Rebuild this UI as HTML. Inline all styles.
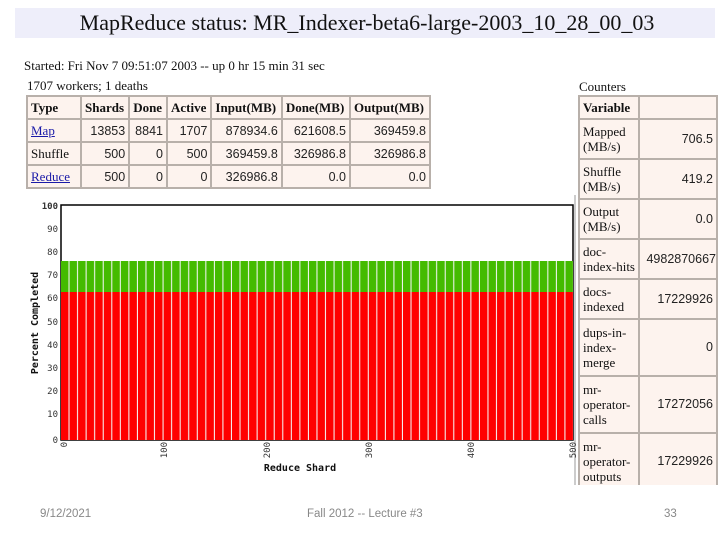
<!DOCTYPE html>
<html><head><style>
body{margin:0;width:720px;height:540px;background:#fff;position:relative;overflow:hidden;font-family:"Liberation Serif",serif;color:#111}
.a{position:absolute}
table{border-collapse:collapse;position:absolute;background:#fdf3ee;font-size:13px}
td{border:2px solid #b8b0aa;padding:0 3px;box-sizing:border-box;white-space:nowrap}
.n{text-align:right;font-family:"Liberation Sans",sans-serif;font-size:12.5px;color:#222}
a{color:#1a1aa8;text-decoration:underline}
.ft{font-family:"Liberation Sans",sans-serif;font-size:11.5px;color:#888;top:508px}
</style></head><body>
<div class="a" style="left:15px;top:8px;width:700px;height:30px;background:#eeeefa"></div>
<div class="a" style="left:0;top:10px;width:734px;text-align:center;font-size:22px">MapReduce status: MR_Indexer-beta6-large-2003_10_28_00_03</div>
<div class="a" style="left:24px;top:58px;font-size:13px">Started: Fri Nov 7 09:51:07 2003 -- up 0 hr 15 min 31 sec</div>
<div class="a" style="left:27px;top:78px;font-size:13px">1707 workers; 1 deaths</div>
<table style="left:26px;top:95px;width:405px">
<tr style="height:23px;font-weight:bold"><td style="width:54px">Type</td><td>Shards</td><td>Done</td><td>Active</td><td>Input(MB)</td><td>Done(MB)</td><td>Output(MB)</td></tr>
<tr style="height:23px"><td><a>Map</a></td><td class="n">13853</td><td class="n">8841</td><td class="n">1707</td><td class="n">878934.6</td><td class="n">621608.5</td><td class="n">369459.8</td></tr>
<tr style="height:23px"><td>Shuffle</td><td class="n">500</td><td class="n">0</td><td class="n">500</td><td class="n">369459.8</td><td class="n">326986.8</td><td class="n">326986.8</td></tr>
<tr style="height:23px"><td><a>Reduce</a></td><td class="n">500</td><td class="n">0</td><td class="n">0</td><td class="n">326986.8</td><td class="n">0.0</td><td class="n">0.0</td></tr>
</table>
<div class="a" style="left:579px;top:79px;font-size:13px">Counters</div>
<table style="left:578px;top:95px;width:140px;font-size:13px;line-height:15px">
<tr style="height:23px"><td style="width:60px;font-weight:bold">Variable</td><td></td></tr>
<tr style="height:40px"><td>Mapped<br>(MB/s)</td><td class="n">706.5</td></tr>
<tr style="height:40px"><td>Shuffle<br>(MB/s)</td><td class="n">419.2</td></tr>
<tr style="height:40px"><td>Output<br>(MB/s)</td><td class="n">0.0</td></tr>
<tr style="height:40px"><td>doc-<br>index-hits</td><td class="n" style="padding:0">4982870667</td></tr>
<tr style="height:40px"><td>docs-<br>indexed</td><td class="n">17229926</td></tr>
<tr style="height:57px"><td>dups-in-<br>index-<br>merge</td><td class="n">0</td></tr>
<tr style="height:57px"><td>mr-<br>operator-<br>calls</td><td class="n">17272056</td></tr>
<tr style="height:57px"><td>mr-<br>operator-<br>outputs</td><td class="n">17229926</td></tr>
</table>
<div class="a" style="left:0;top:485px;width:720px;height:55px;background:#fff"></div>
<svg class="a" style="left:0;top:190px" width="580" height="295" font-family="DejaVu Sans Mono,monospace" font-size="9" fill="#333">
<defs><pattern id="p" x="61" width="8.55" height="10" patternUnits="userSpaceOnUse"><rect x="7.5" width="1.2" height="10" fill="#f4f4f4"/></pattern></defs>
<rect x="61" y="15" width="512" height="235" fill="#fff" stroke="#000" stroke-width="1.5"/>
<rect x="61" y="71" width="512" height="31" fill="#44bb00"/>
<rect x="61" y="102" width="512" height="148" fill="#f00"/>
<rect x="61" y="71" width="512" height="179" fill="url(#p)"/>
<line x1="575" y1="5" x2="575" y2="295" stroke="#999"/>
<g text-anchor="end">
<text x="58" y="19" font-weight="bold">100</text><text x="58" y="42">90</text><text x="58" y="65">80</text><text x="58" y="88">70</text><text x="58" y="111">60</text><text x="58" y="135">50</text><text x="58" y="158">40</text><text x="58" y="181">30</text><text x="58" y="204">20</text><text x="58" y="227">10</text><text x="58" y="253">0</text></g>
<g text-anchor="end">
<text transform="translate(67,252) rotate(-90)">0</text><text transform="translate(167,252) rotate(-90)">100</text><text transform="translate(270,252) rotate(-90)">200</text><text transform="translate(372,252) rotate(-90)">300</text><text transform="translate(474,252) rotate(-90)">400</text><text transform="translate(576,252) rotate(-90)">500</text></g>
<text x="300" y="281" text-anchor="middle" font-weight="bold" font-size="10" fill="#111">Reduce Shard</text>
<text transform="translate(38,133) rotate(-90)" text-anchor="middle" font-weight="bold" font-size="10" fill="#111">Percent Completed</text>
</svg>
<div class="a ft" style="left:40px">9/12/2021</div>
<div class="a ft" style="left:307px">Fall 2012 -- Lecture #3</div>
<div class="a ft" style="left:664px">33</div>
</body></html>
